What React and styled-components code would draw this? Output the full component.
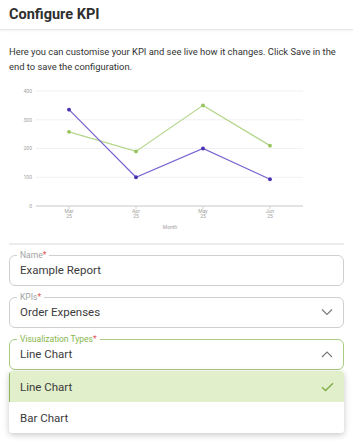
import React from 'react';
import styled, { createGlobalStyle } from 'styled-components';

const GlobalStyle = createGlobalStyle`
    html, body {
        margin: 0;
        padding: 0;
        background: #ffffff;
        font-family: Roboto, "Liberation Sans", sans-serif;
        color: #333333;
    }
    * {
        box-sizing: border-box;
    }
`;

const months = ['Mar', 'Apr', 'May', 'Jun'];
const expenses = [335, 100, 200, 93];
const target = [258, 190, 350, 210];

const xFor = (i) => 60 + i * 67;
const yFor = (v) => 122 - v * 0.2875;
const pointsFor = (data) => data.map((v, i) => `${xFor(i)},${yFor(v)}`).join(' ');

const KpiChart = () => (
    <ChartSvg viewBox="0 0 335 150" width="335" height="150">
        {[100, 200, 300, 400].map((v) => (
            <line key={v} x1="27" x2="294" y1={yFor(v)} y2={yFor(v)} stroke="#eeeef4" strokeWidth="0.8" />
        ))}
        {[0, 100, 200, 300, 400].map((v) => (
            <text key={v} x="23" y={yFor(v) + 1.8} fontSize="5" fill="#a0a0a0" textAnchor="end">{v}</text>
        ))}
        <line x1="27" x2="294" y1="122" y2="122" stroke="#c8c8c8" strokeWidth="1" />
        {months.map((m, i) => (
            <g key={m}>
                <line x1={xFor(i)} x2={xFor(i)} y1="122" y2="125" stroke="#c8c8c8" strokeWidth="0.8" />
                <text x={xFor(i)} y="129" fontSize="5" fill="#a0a0a0" textAnchor="middle">{m}</text>
                <text x={xFor(i)} y="134" fontSize="5" fill="#a0a0a0" textAnchor="middle">25</text>
            </g>
        ))}
        <text x="161" y="145" fontSize="5" fill="#a0a0a0" textAnchor="middle">Month</text>
        <polyline points={pointsFor(target)} fill="none" stroke="#b3d68a" strokeWidth="1.2" />
        <polyline points={pointsFor(expenses)} fill="none" stroke="#7a63cf" strokeWidth="1.2" />
        {target.map((v, i) => (
            <circle key={`t${i}`} cx={xFor(i)} cy={yFor(v)} r="1.9" fill="#95c45a" />
        ))}
        {expenses.map((v, i) => (
            <circle key={`e${i}`} cx={xFor(i)} cy={yFor(v)} r="1.9" fill="#4b30b3" />
        ))}
    </ChartSvg>
);

const ChevronIcon = ({ up }) => (
    <svg width="12" height="8" viewBox="0 0 12 8">
        <path d={up ? 'M1 7 L6 2 L11 7' : 'M1 1.5 L6 6.5 L11 1.5'} fill="none" stroke="#7a7a7a" strokeWidth="1.2" />
    </svg>
);

const CheckIcon = () => (
    <svg width="13" height="10" viewBox="0 0 13 10">
        <path d="M1 5.2 L4.6 8.6 L12 1.2" fill="none" stroke="#7fad48" strokeWidth="1.4" />
    </svg>
);

const Field = ({ label, value, icon, active }) => (
    <FieldBox $active={active}>
        <Legend $active={active}>
            {label}
            <Required>*</Required>
        </Legend>
        <Value>{value}</Value>
        {icon && <IconSlot>{icon}</IconSlot>}
    </FieldBox>
);

const App = () => {
    return (
        <Page>
            <GlobalStyle />
            <Header>
                <Title>Configure KPI</Title>
            </Header>
            <Body>
                <Description>
                    Here you can customise your KPI and see live how it changes. Click Save in the end to save the configuration.
                </Description>
                <KpiChart />
                <Divider />
                <Form>
                    <Field label="Name" value="Example Report" />
                    <Field label="KPIs" value="Order Expenses" icon={<ChevronIcon />} />
                    <SelectGroup>
                        <Field label="Visualization Types" value="Line Chart" icon={<ChevronIcon up />} active />
                        <Menu>
                            <Option $selected>
                                Line Chart
                                <CheckIcon />
                            </Option>
                            <Option>Bar Chart</Option>
                        </Menu>
                    </SelectGroup>
                </Form>
            </Body>
        </Page>
    );
};

const Page = styled.div`
    width: 353px;
    height: 442px;
    overflow: hidden;
    background: #ffffff;
`;

const Header = styled.div`
    height: 30px;
    display: flex;
    align-items: center;
    padding: 0 9px;
    border-bottom: 1px solid #e6e6e6;
    box-shadow: 0 1px 3px rgba(0, 0, 0, 0.05);
`;

const Title = styled.h1`
    margin: 0;
    font-size: 14.5px;
    font-weight: 700;
    color: #2f2f2f;
`;

const Body = styled.div`
    padding: 0 9px;
`;

const Description = styled.p`
    margin: 14px 0 10px;
    font-size: 9.4px;
    line-height: 15px;
    color: #333333;
`;

const ChartSvg = styled.svg`
    display: block;
    font-family: Roboto, "Liberation Sans", sans-serif;
`;

const Divider = styled.div`
    height: 2px;
    margin-top: 9px;
    background: #ececec;
`;

const Form = styled.div`
    display: flex;
    flex-direction: column;
    gap: 6px;
    margin-top: 5px;
`;

const SelectGroup = styled.div`
    display: flex;
    flex-direction: column;
`;

const FieldBox = styled.fieldset`
    margin: 0;
    height: 36px;
    padding: 3px 10px 0 7px;
    display: flex;
    align-items: center;
    border: 1px solid ${(p) => (p.$active ? '#a9cc80' : '#cfcfcf')};
    border-radius: 6px;
    min-width: 0;
`;

const Legend = styled.legend`
    padding: 0 3px;
    font-size: 8.5px;
    line-height: 10px;
    color: ${(p) => (p.$active ? '#86b64c' : '#a3a3a3')};
`;

const Required = styled.span`
    color: #e25555;
`;

const Value = styled.span`
    flex: 1;
    padding-left: 3px;
    font-size: 11.5px;
    color: #3c3c3c;
`;

const IconSlot = styled.span`
    display: flex;
    align-items: center;
`;

const Menu = styled.div`
    margin-top: 1px;
    border-radius: 4px;
    overflow: hidden;
    background: #ffffff;
    box-shadow: 0 2px 6px rgba(0, 0, 0, 0.22);
`;

const Option = styled.div`
    height: 31px;
    display: flex;
    align-items: center;
    justify-content: space-between;
    padding: 0 10px 0 ${(p) => (p.$selected ? '10px' : '11px')};
    font-size: 11.5px;
    color: #3a3a3a;
    background: ${(p) => (p.$selected ? '#e2efcb' : '#ffffff')};
    border-left: ${(p) => (p.$selected ? '1.5px solid #8db85a' : 'none')};
`;

export default App;
